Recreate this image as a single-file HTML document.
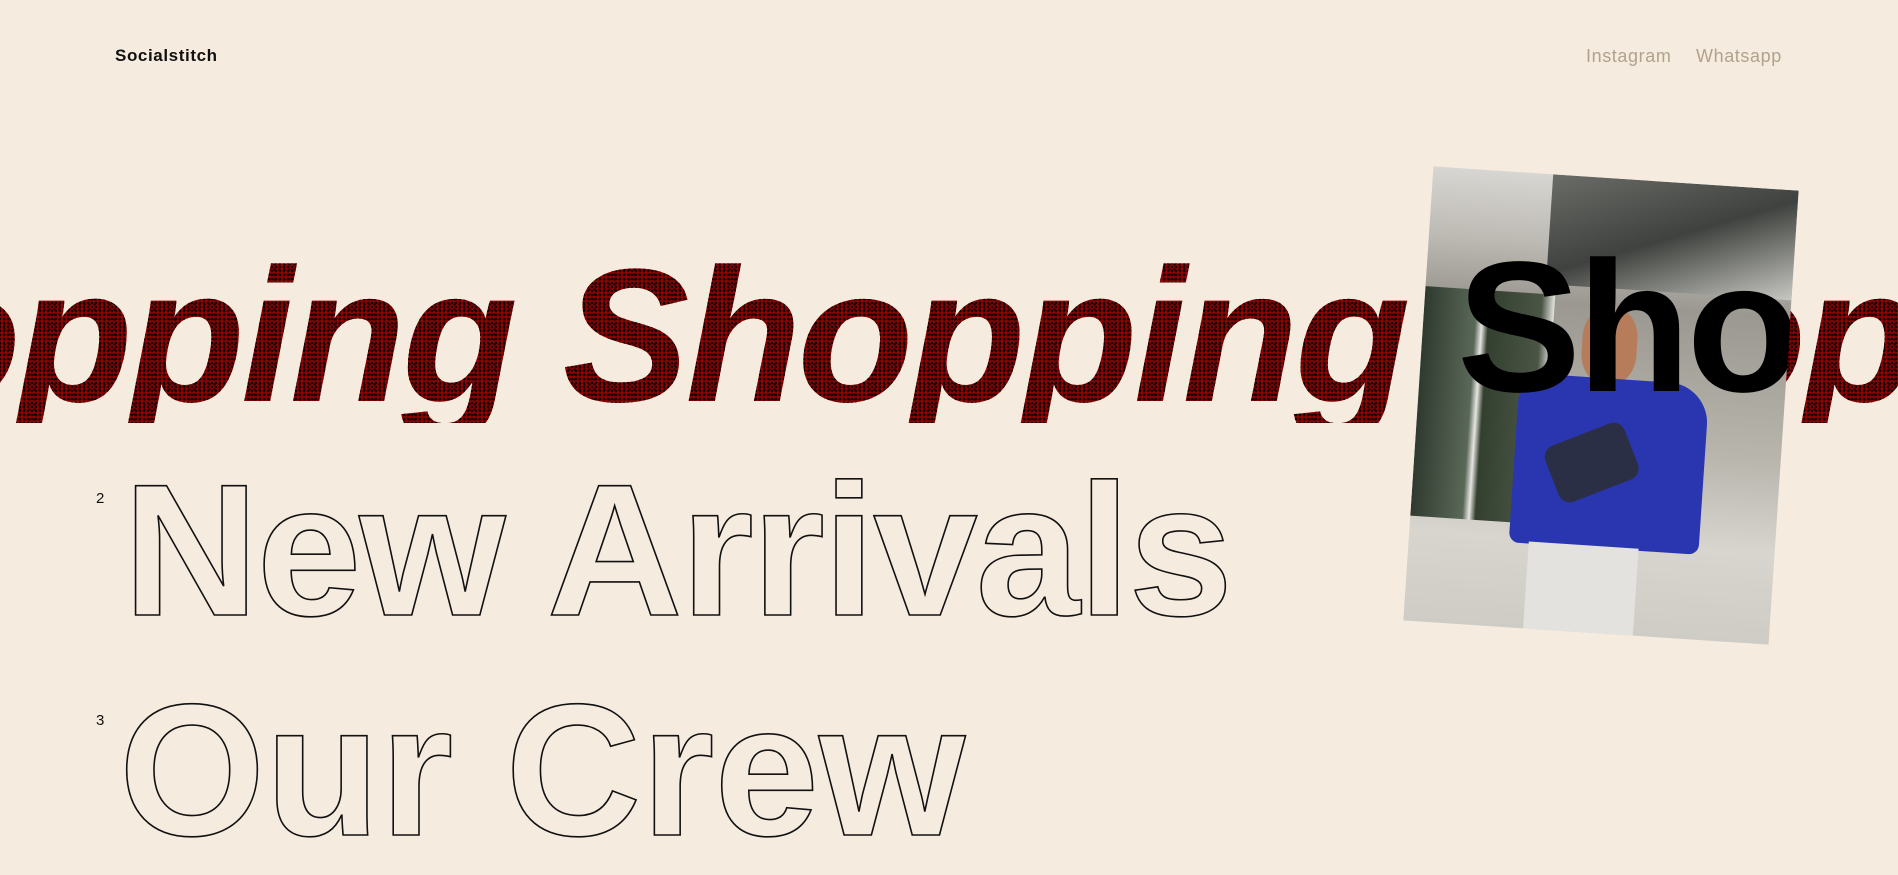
<!DOCTYPE html>
<html><head><meta charset="utf-8"><style>
html,body{margin:0;padding:0}
body{width:1898px;height:872px;overflow:hidden;background:#f6ebdf;position:relative;font-family:"Liberation Sans",sans-serif}
.nav{position:absolute;top:46px;font-size:18px;line-height:20px;letter-spacing:0.6px}
.red{position:absolute;left:0;top:0;width:1898px;height:423px;overflow:hidden}
.red .t{position:absolute;left:-330px;top:241px;font-size:190px;line-height:1;font-weight:bold;font-style:italic;letter-spacing:-4px;white-space:nowrap;
color:#7d0606;background:radial-gradient(circle,#120000 1px,transparent 1.6px) 0 0/4px 4px,radial-gradient(circle,#1a0000 0.9px,transparent 1.4px) 2px 1px/5px 5px,#8f0505;-webkit-background-clip:text;background-clip:text;-webkit-text-fill-color:transparent}
.photo{position:absolute;left:1418px;top:178px;width:366px;height:455px;transform:rotate(3.8deg);overflow:hidden;
background:linear-gradient(180deg,#d8d6d2 0%,#bdbab4 15%,#9a9890 28%,#b9b6ae 60%,#d8d5cf 80%,#cfcbc5 100%)}
.photo .win{position:absolute;left:0;top:120px;width:130px;height:230px;background:linear-gradient(90deg,#2e3a2e,#5a6858 40%,#e6e6e2 45%,#34402f 50%,#4a5545 90%,#e5e5e1)}
.photo .roof{position:absolute;left:120px;top:0;width:246px;height:110px;background:linear-gradient(160deg,#6a6c68,#3f423e 50%,#c7c7c2)}
.photo .shirt{position:absolute;left:100px;top:200px;width:190px;height:170px;background:#2a36b0;border-radius:30px 40px 10px 10px}
.photo .bag{position:absolute;left:135px;top:255px;width:85px;height:60px;background:#2b2f45;border-radius:12px;transform:rotate(-25deg)}
.photo .pants{position:absolute;left:120px;top:368px;width:110px;height:100px;background:#e4e2de}
.photo .head{position:absolute;left:160px;top:130px;width:55px;height:75px;background:#b77c5a;border-radius:40%}
.blk{position:absolute;left:0;top:0;width:1898px;height:872px;clip-path:polygon(1434px 166px,1799px 190px,1769px 644px,1403px 620px)}
.blk .t{position:absolute;left:1457px;top:235px;font-size:186px;line-height:1;font-weight:bold;color:#000;white-space:nowrap;letter-spacing:-4px}
.out{position:absolute;font-size:188px;line-height:1;font-weight:bold;color:transparent;-webkit-text-stroke:1.6px #111;white-space:nowrap}
.num{position:absolute;font-size:15px;color:#111}
</style></head><body>
<div class="nav" style="left:115px;color:#111;font-weight:bold;font-size:17px">Socialstitch</div>
<div class="nav" style="left:1586px;color:#b2a28c">Instagram</div>
<div class="nav" style="left:1696px;color:#b2a28c">Whatsapp</div>
<div class="red"><div class="t">Shopping Shopping Shopping</div></div>
<div class="photo"><div class="roof"></div><div class="win"></div><div class="head"></div><div class="shirt"></div><div class="bag"></div><div class="pants"></div></div>
<div class="blk"><div class="t">Shop</div></div>
<div class="num" style="left:96px;top:490px">2</div>
<div class="out" style="left:123px;top:456px;letter-spacing:-2px">New Arrivals</div>
<div class="num" style="left:96px;top:712px">3</div>
<div class="out" style="left:119px;top:676px;letter-spacing:0">Our Crew</div>
</body></html>
